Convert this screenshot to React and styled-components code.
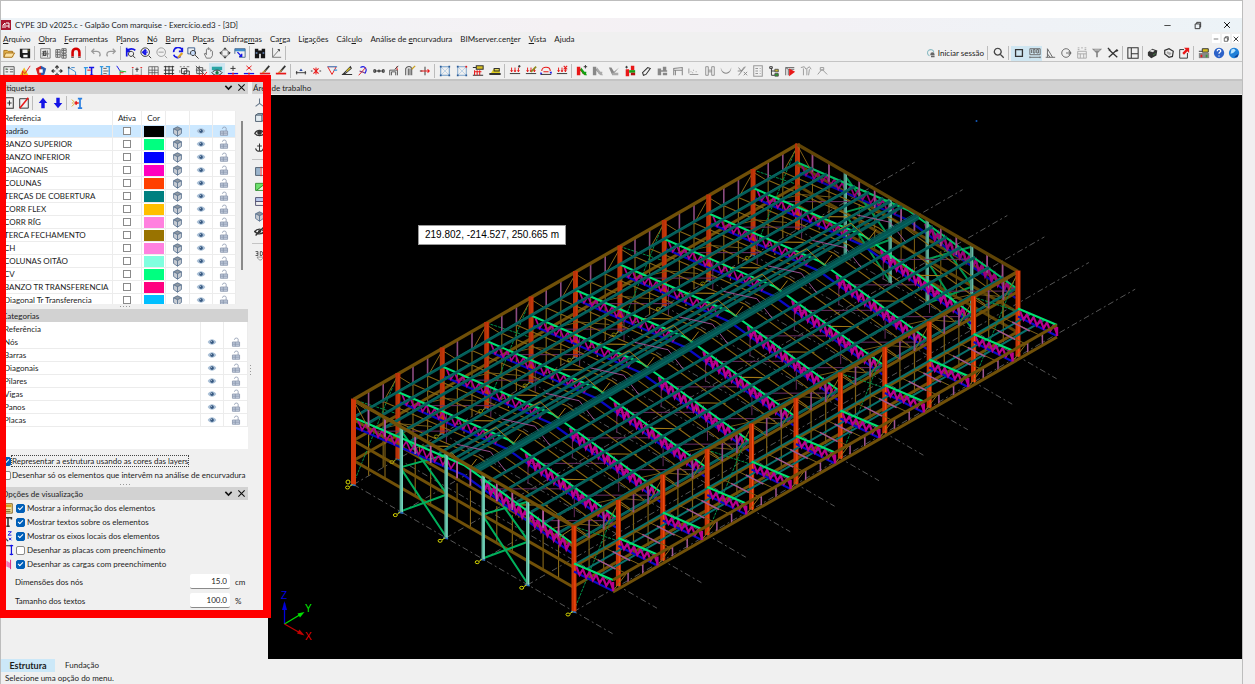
import React, { useState } from 'react'
import styled, { createGlobalStyle } from 'styled-components'

/* ---------- icons: [colour, path, 'f' when filled, stroke width] ---------- */
const K = '#333'
const G = '#9a9a9a'
const B = '#1414e6'
const R = '#e81818'

const lens = (c) => [[c, 'M5.5 1.5a4 4 0 1 0 .1 0M8.5 8.5l4 4', '', 1.5]]
const loads = [[R, 'M3 3v5M2 6l1 2 1-2M7 3v5M6 6l1 2 1-2M11 3v5M10 6l1 2 1-2'], [K, 'M1 10h12']]
const bars = (a, b) => [[a, 'M1 2h4v10h-4zM1 2h2l9 9h-3z', 'f'], [b, 'M6 3l7 9h-3L5 6zM7 8h5v2H7z', 'f']]
const cube = [['#c7ccd3', 'M7 1l5 2.5v6L7 13 2 9.500v-6z', 'f'], ['#8d96a0', 'M7 1l5 2.500L7 6 2 3.500z', 'f'], ['#4f6a8a', 'M7 1l5 2.500v6L7 13 2 9.500v-6zM2 3.500L7 6l5-2.500M7 6v7', '', 1]]

const ICONS = {
  folder: [['#e5b44c', 'M1 4h4l1 1h6v7H1z', 'f'], ['#fbe0a0', 'M3 7h11l-3 5H1z', 'f'], ['#a9741d', 'M1 12V4h4l1 1h5v2M3 7h10.500l-3 5H1z']],
  save: [['#1c1c1c', 'M1 2h12v11H3l-2-2z', 'f'], ['#f4f4f4', 'M4 3h6v4H4zM5 9h5v3H5z', 'f'], ['#8c8c2c', 'M11 3h1v2h-1z', 'f']],
  sheet: [['#777', 'M2 2h11v11H2zM4 5l4 5M8 4l-4 7M10 4v8M3 8h9'], [K, 'M5 5h3v5H5z']],
  hatch: [['#666', 'M1 3h5v9H1zM8 2h5v5H8zM8 8h5v5H8zM1 6h5M1 9h5M8 4h5M8 10h5M3 3v9M10 2v11']],
  magnet: [['#d40000', 'M3 12V6a4 4 0 0 1 8 0v6', '', 3], ['#fff', 'M1.500 11h3v2h-3zM9.500 11h3v2h-3z', 'f'], [K, 'M1.500 12h3M9.500 12h3']],
  undo: [[G, 'M5 2L2 5l3 3M2 5h6c3 0 5 3 3 6', '', 1.5]],
  redo: [[G, 'M9 2l3 3-3 3M12 5H6C3 5 1 8 3 11', '', 1.5]],
  zoomPrev: [[B, 'M2 11V6c0-4 7-5 10-2M2 1v4h4', '', 2], [K, 'M7 5a3 3 0 1 0 .1 0M9 10l3 3']],
  zoomAll: [[K, 'M6 1a5 5 0 1 0 .1 0M10 10l3 3'], [B, 'M6 3v6M3 6h6M4.500 4.500L6 3l1.500 1.500M4.500 7.500L6 9l1.500-1.500M4.500 4.500L3 6l1.500 1.500', '', 1.5]],
  zoomDis: [[G, 'M6 1a5 5 0 1 0 .1 0M10 10l3 3M3 6h6']],
  redraw: [[B, 'M12 5A5 5 0 0 0 2 6M2 9a5 5 0 0 0 8 2M12 1v4H8', '', 2], ['#dca32c', 'M6 12l5-6 2 2-5 5z', 'f']],
  zoomWin: [['#3c5c8c', 'M1 1h8v7H1z'], ['#c8dcf8', 'M6 4a3 3 0 1 0 .1 0', 'f'], [K, 'M7 4a3 3 0 1 0 .1 0M9.500 9.500l4 4']],
  hand: [['#777', 'M4 13L1.500 8l1-1L4 9V3l1-1 1 1V1h1v2l1-1 1 1v2l1-1 1 1v5l-2 3z']],
  orbit: [[K, 'M7 1v3M7 10v3M1 7h3M10 7h3M5 3l2-2 2 2M5 11l2 2 2-2M3 5L1 7l2 2M11 5l2 2-2 2'], ['#777', 'M7 3a4 4 0 1 0 .1 0']],
  fitWin: [['#3f8fd0', 'M1 2h12v3H1z', 'f'], ['#4c6c90', 'M1 2h12v10H6M1 2v6'], [B, 'M4 6l5 5M9 8v3H6', '', 1.5]],
  binoc: [['#161616', 'M1 2h4v2h4V2h4v11H8V8H6v5H1z', 'f'], ['#6d8fc4', 'M2 6h2v2H2zM10 6h2v2h-2z', 'f']],
  angle: [['#777', 'M3 1v11h10M3 12L11 3'], [K, 'M9 3h2v2']],
  search: lens('#444'),
  square: [[K, 'M3 3h8v8H3z', '', 1.5]],
  ruler: [['#666', 'M1 2h12v7H1zM3 3v4M5 3v4h2V3zM9 3v4h2V3zM1 12h12M1 11v2M13 11v2']],
  tri: [['#666', 'M2 12h11M4 12V2l6 10M4 8l3 4']],
  dial: [['#666', 'M7 2a5 5 0 1 0 .1 0M7 7h6M10 5l3 2-3 2']],
  panels: [['#aaa', 'M2 5h10v8H2zM2 1h2M6 1h2M10 1h2M2 3h2M10 3h2M2 8h10M5 8v5M9 8v5']],
  funnel: [['#888', 'M1 2h12L8 7v5H6V7z', 'f'], ['#ddd', 'M4 3h6v1H4z', 'f']],
  tools: [[K, 'M2 3l10 9M12 3L2 12M1 1l3 3M10 5l3-1', '', 1.5]],
  layout: [[K, 'M1 1h12v12H1zM5 1v12M5 8h8', '', 1.2]],
  printer: [[K, 'M1 6l5-4 6 2-1 6-6 3-4-3z', 'f'], ['#ddd', 'M5 3l4 1-2 2-4-1z', 'f'], ['#4a9a4a', 'M7 9l3-2v1L7 10z', 'f']],
  printer2: [[K, 'M2 4l5-2 5 3-1 6-4 1-5-4z', '', 1.4], ['#aaa', 'M5 5l5 2-2 3-4-3z', 'f']],
  export: [[K, 'M7 3H2v10h9V7'], [R, 'M7 1h6v6l-2-2-4 4-2-2 4-4z', 'f']],
  site: [['#888', 'M1 7h12v6H1z', 'f'], ['#d8c020', 'M5 2h7v4H5z', 'f'], [K, 'M5 2h7v4H5zM1 5h4'], [R, 'M3 9h2v3H3z', 'f'], ['#3a9a3a', 'M9 9h2v3H9z', 'f']],
  help: [['#2c62c8', 'M7 1a6 6 0 1 0 .1 0', 'f'], ['#fff', 'M5 5c0-3 4-3 4 0 0 1-2 1-2 3M7 10v1', '', 1.5]],
  globe: [['#1f7fd8', 'M7 1a6 6 0 1 0 .1 0', 'f'], ['#b8e4ff', 'M4 3l3-1 2 2-3 3-3 1z', 'f'], ['#0c3c90', 'M7 12l5-4-1 4z', 'f']],
  user: [['#8cbcc4', 'M11 6a4.500 4.500 0 1 0-6 5', '', 1.5], ['#666', 'M6 9a3 3 0 0 1 6 0v1H6zM7 11h5v2H7z', 'f']],
  list: [['#555', 'M1 2h12v10H1zM3 5h3M3 8h3M8 5h4M8 8h4'], ['#5d8f5d', 'M3 4h2v1H3z', 'f']],
  warn: [['#f0c020', 'M6 3l5 9H1z', 'f'], [R, 'M4 12V7l3 3 6-9', '', 1]],
  shield: [['#d42020', 'M1 4l6-3v12l-4-2z', 'f'], ['#2c5cb0', 'M7 1l6 3-2 7-4 2z', 'f'], ['#fff', 'M5 5h4v4H5z', 'f']],
  move: [[K, 'M7 1v4M7 9v4M1 7h4M9 7h4M5 3l2-2 2 2M5 11l2 2 2-2M3 5L1 7l2 2M11 5l2 2-2 2', '', 1.3]],
  rotate: [['#3f86c8', 'M2 3v9h10M2 3l8 5v4M5 3h4'], [K, 'M1 2h2v2H1z', 'f']],
  beamRed: [[B, 'M7 3h6M10 3v9M8 12h4', '', 1.8], ['#3498e0', 'M1 3h5M3 3v9', '', 1.5], [R, 'M5 6h4', '', 1.2]],
  beamBlue: [['#3498e0', 'M1 2h4M1 12h4M3 2v10M8 2h5M8 12h5M12 2v10', '', 1.5], [K, 'M5 4h4M5 7h6M5 10h4', '', .8]],
  axes: [['#22b022', 'M6 7l7 1M6 7v5'], [B, 'M2 1l4 6'], [R, 'M6 9h4']],
  dims: [['#888', 'M2 4v8h10V4'], [R, 'M1 3h2M11 3h2'], [K, 'M7 3v5M5 5h4M5 12h4']],
  grid: [['#555', 'M2 2h11v11H2zM2 6h11M2 9h11M6 2v11M9 2v11', '', .9]],
  gridThick: [[K, 'M1 2h12M1 6h12M1 10h12M3 1v12M7 1v12M11 1v12', '', 1.1]],
  group: [[K, 'M3 4h6v6H3zM6 7h6v5H6z'], ['#777', 'M1 2h2M5 2h2M9 2h3M1 6v3']],
  groupRed: [['#555', 'M2 3h7v7H2zM5 1v12M1 6h12M1 1l11 11'], [R, 'M8 10l2 3 4-5']],
  eyeGrid: [['#2aa5a5', 'M1 2h12v4H1z', 'f'], [K, 'M1 9c3-4 9-4 12 0-3 4-9 4-12 0z'], ['#1d7a45', 'M7 7a2 2 0 1 0 .1 0', 'f']],
  nodeAdd: [[K, 'M7 1v6M4 4h6'], [B, 'M1 10h12', '', 1.5], [R, 'M6 9h2v2H6z', 'f']],
  nodeDel: [[R, 'M4 1l6 5M10 1L4 6'], [B, 'M1 10h12', '', 1.5], [R, 'M6 9h2v2H6z', 'f']],
  pencilRed: [[K, 'M12 1L6 8', '', 2], ['#d8a040', 'M9 5l-4 5-2 1 1-3z', 'f'], [R, 'M1 10h12', '', 2]],
  barNode: [[K, 'M1 9h12M2 7v4M12 7v4'], ['#2c4ca8', 'M5 7l2-3 2 3z', 'f']],
  barDel: [[R, 'M4 4l6 6M10 4l-6 6M7 3v8', '', 1.2], [K, 'M1 7h2M11 7h2']],
  hinge: [[R, 'M2 2l5 9 5-9z'], ['#3498e0', 'M2 2h11M9 6h4', '', 1.3]],
  pencil: [[K, 'M1 11h12M3 10l8-8 1 2-7 6z', '', 1.2], ['#d8c020', 'M6 7l4-4 1 1-4 4z', 'f']],
  release: [[B, 'M4 3c5-3 9 2 5 7', '', 1.3], [R, 'M2 12l8-9'], ['#7c2c7c', 'M3 7l6 2', '', 1.3]],
  span: [[K, 'M1 7h12M1 5.500h2v3H1zM11 5.500h2v3h-2zM6 6h2v2H6z']],
  frame: [['#555', 'M2 12V6h9v6M4 12V8h5v4'], [R, 'M10 2l1 4'], [K, 'M8 5l4-4']],
  arch: [['#555', 'M2 12V4c2-3 6-3 7 0v8M5 12V4M7 12V4', '', 1.2], ['#caa020', 'M9 5l4-4', '', 1.5]],
  split: [[K, 'M7 2v10M1 7h3'], [R, 'M2 7h10M10 5l2 2-2 2', '', 1.2]],
  panel: [['#6f9cc8', 'M2 2h10v10H2z', '', 1.2], ['#9dc0e0', 'M2 2l10 10M12 2L2 12', '', .7], ['#2c5c98', 'M1 1h2v2H1zM11 1h2v2h-2zM1 11h2v2H1zM11 11h2v2h-2z', 'f']],
  panelRed: [['#6f9cc8', 'M2 2h10v10H2z', '', 1], ['#9dc0e0', 'M2 2l10 10M12 2L2 12', '', .7], ['#2c5c98', 'M1 1h2v2H1zM1 11h2v2H1zM11 11h2v2h-2z', 'f'], [R, 'M11 1h2v2h-2z', 'f']],
  loadCase: [['#d8c020', 'M5 1h8v4H5z', 'f'], [K, 'M5 1h8v4H5zM1 3h4M1 12h12', '', 1.2], [R, 'M3 6v6M6 6v6M9 6v6M3 8h8', '', 1.2]],
  truck: [['#e0d020', 'M5 5h7l1 5H2z', 'f'], [K, 'M6 4h6v3H6zM1 10h12v1H1z', '', 1.2]],
  loadAdd: [...loads, [K, 'M12 0v3M10.500 1.500h3']],
  loadEdit: [...loads, ['#8c8c20', 'M7 8l6-6', '', 2]],
  loadMove: [[R, 'M2 7c0-6 10-6 10 0M4 8h6', '', 1.2], [B, 'M1 8l2 3H0zM11 8h3l-1 3z', 'f'], [K, 'M1 11h12']],
  loadDel: [...loads, [R, 'M9 1l4 4M13 1L9 5', '', 1.3]],
  rg: [...bars(R, '#11a011'), [K, 'M9 2h4M11 0v4']],
  gy: bars('#888', '#aaa'),
  gy2: [['#888', 'M1 3l4 9 8-9-6 5-3-5z', 'f'], ['#aaa', 'M5 9h7v3H5z', 'f']],
  rg2: [[R, 'M2 5h4v8H2zM8 1h4v5H8z', 'f'], ['#11a011', 'M6 6h7v3H6z', 'f'], ['#b01010', 'M8 9h5v3H8z', 'f'], [K, 'M3 1v3M1.500 2.500h3']],
  brush: [[K, 'M4 12L3 9l6-6 3 1-5 7z', '', 1.2]],
  gySteel: [['#888', 'M2 4h4v8H2zM8 2h4v4H8zM6 6h7v2H6zM8 9h5v3H8z', 'f']],
  portal: [['#888', 'M2 12V4l10-1v9M2 6h10M4 12V6', '', 1.2]],
  dots: [['#999', 'M2 11h10M3 8h1M6 6h1M9 8h1M5 9h1M1 4v6', '', 1.2]],
  hbeam: [['#888', 'M2 2h3v10H2zM9 2h3v10H9zM5 6h4M5 8h4', '', 1]],
  curve: [['#888', 'M1 3c1 8 11 8 12 0v2c-2 7-10 7-12 0z', 'f']],
  slash: [['#888', 'M3 3l3 4 4-5M3 12L11 2M6 7H2M9 8l4 4M13 8l-4 4']],
  report: [['#999', 'M2 1h10v12H2zM4 4h3M4 7h3M4 10h3M9 4h1M9 7h1M9 10h1', '', 1.2]],
  tree: [[K, 'M2 2h3v2H2zM4 4v8h4M4 7h4'], ['#c8b820', 'M8 5h4v3H8z', 'f'], ['#26a026', 'M8 10h4v3H8z', 'f'], ['#555', 'M8 5h4v3H8zM8 10h4v3H8z']],
  play: [['#666', 'M2 12V3h10M5 12V5h7M2 3l3 2'], [R, 'M6 4l7 4-7 5z', 'f']],
  poly: [['#999', 'M1 3l4-1 2 3 4-3 2 3M4 4v8M8 5v7M11 5l-1 7']],
  node: [['#999', 'M2 11l5-6 6 6M5 3h4v3H5z']],
  newDoc: [[K, 'M3 1h9v12H3zM5 7h5M7.500 4v6', '', 1.2]],
  noDoc: [[K, 'M2 2h10v11H2z'], [R, 'M12 1L2 13', '', 1.8]],
  up: [[B, 'M7 1l5 6H9v6H5V7H2z', 'f']],
  down: [[B, 'M7 13l5-6H9V1H5v6H2z', 'f']],
  assign: [['#2a7fe0', 'M8 2h5M8 13h5M10.500 2v11', '', 2], [R, 'M4 7h5M6 5v4', '', 2], ['#d8b020', 'M1 3l3 3M1 11l3-3M1 7h2']],
  axis3: [['#678', 'M7 2v6M7 8l-5 4M7 8l5 4', '', 1.3]],
  cube,
  box: [['#a9c0cf', 'M2 4l3-2h8v8l-3 2H2z', 'f'], ['#e4edf2', 'M2 4h8v8H2z', 'f'], ['#456', 'M2 4h8v8H2zM2 4l3-2h8v8l-3 2M10 4l3-2']],
  eye: [['#a9bfd6', 'M1 7c3-5 9-5 12 0-3 5-9 5-12 0z', 'f'], ['#35577f', 'M7 4.500a2.500 2.500 0 1 0 .1 0', 'f'], ['#fff', 'M6 6h1v1H6z', 'f']],
  eyeBlack: [[K, 'M1 8c3-5 9-5 12 0-3 4-9 4-12 0z', '', 1.5], [K, 'M7 4a3 3 0 1 0 .1 0', 'f']],
  eyeOff: [[K, 'M1 7c3-4 9-4 12 0-3 4-9 4-12 0zM2 12L12 2', '', 1.8], [K, 'M7 5a2 2 0 1 0 .1 0', 'f']],
  anchor: [[K, 'M7 2v10M4 5h6M2 8c1 5 9 5 10 0', '', 1.3]],
  lock: [['#c3cddd', 'M2 7h10v6H2z', 'f'], ['#8794ab', 'M2 7h10v6H2zM5 4V3c0-2 5-2 5 0v4M2 10h10M6 7v6']],
  section: [['#9bb4cc', 'M2 2h6v10H2z', 'f'], ['#456', 'M2 2h10v10H2z'], [R, 'M9 1v12']],
  green: [['#6ee06e', 'M2 3h11v9H2z', 'f'], ['#e8f8e8', 'M4 12l9-7v7z', 'f'], ['#2c8a2c', 'M2 3h11v9H2zM3 12l9-7']],
  plan: [['#b8c8ec', 'M2 2h11v5H2z', 'f'], ['#446', 'M2 2h11v10H2zM2 7h11']],
  info: [['#f4e8a8', 'M2 2h10v11H2z', 'f'], ['#806020', 'M2 2h10v11H2zM4 9h6M4 11h6'], ['#d8a020', 'M3 3h8v3H3z', 'f']],
  textT: [[K, 'M3 4V2h8v2M7 2v10M5 12h4', '', 1.8]],
  local: [[K, 'M2 2v7l5 4M5 10l2 3'], [B, 'M7 2h4L7 6h4M8 9l3 3M11 9l-3 3']],
  plates: [[K, 'M2 2v10M2 2h9', '', 1.3], [B, 'M11 1v12M9 12h4M9 2h4', '', 1.4]],
  loadFill: [['#f07ab8', 'M5 3l5 3v6l-5-2z', 'f'], ['#d82080', 'M4 1v12M10 2v11']],
  view3d: [['#444', 'M2 2h3v5H2M3 4.500h2M8 2v5M8 2h2l1 2v1l-1 2H8'], ['#888', 'M4 9c2 5 6 5 8 0M4 9h8']],
  chevron: [['#111', 'M3 5l4 4 4-4', '', 2]],
  close: [['#111', 'M3 3l8 8M11 3l-8 8', '', 1.4]],
  min: [[K, 'M3 7h8']],
  restore: [[K, 'M4 5h6v6H4zM6 5V3h5v6h-1', '', 1.2]],
}

const IconSvg = styled.svg`
  display: block;
  flex: none;
  width: ${(p) => p.$size}px;
  height: ${(p) => p.$size}px;
`

const Icon = ({ name, size = 12 }) => (
  <IconSvg $size={size} viewBox="0 0 14 14" aria-hidden="true">
    {ICONS[name].map(([c, d, mode, w], i) =>
      mode === 'f' ? <path key={i} d={d} fill={c} /> : <path key={i} d={d} fill="none" stroke={c} strokeWidth={w || 1.1} />
    )}
  </IconSvg>
)

/* ---------- data ---------- */
const menus = ['_Arquivo', '_Obra', '_Ferramentas', 'P_lanos', '_Nó', '_Barra', 'Pla_cas', 'Diafrag_mas', 'Ca_rga', 'Liga_ções', 'Cálc_ulo', 'Análise de _encurvadura', 'BIMserver.cen_ter', '_Vista', 'A_juda']

const mainTools = [
  [32, ['folder', 'save']],
  [47, ['sheet', 'hatch', 'magnet']],
  [31, ['undo', 'redo']],
  [125, ['zoomPrev', 'zoomAll', 'zoomDis', 'redraw', 'zoomWin', 'hand', 'orbit', 'fitWin']],
  [32, ['binoc', 'angle']],
]
const rightTools = [
  [17, ['search']],
  [110, ['square', 'ruler', 'tri', 'dial', 'panels', 'funnel', 'tools']],
  [16, ['layout']],
  [47, ['printer', 'printer2', 'export']],
  [46, ['site', 'help', 'globe']],
]
const barTools = [
  [288, ['list', 'warn', 'shield', 'move', 'rotate', 'beamRed', 'beamBlue', 'axes', 'dims', 'grid', 'gridThick', 'group', 'groupRed', 'eyeGrid', 'nodeAdd', 'nodeDel', 'pencilRed', 'pencilRed']],
  [140, ['barNode', 'barDel', 'hinge', 'pencil', 'release', 'span', 'frame', 'arch', 'split']],
  [66, ['panel', 'panelRed', 'loadCase', 'truck']],
  [63, ['loadAdd', 'loadEdit', 'loadMove', 'loadDel']],
  [256, ['rg', 'gy', 'gy2', 'rg2', 'brush', 'gySteel', 'portal', 'dots', 'hbeam', 'curve', 'slash', 'report', 'tree', 'play', 'poly', 'node']],
]
const sideTools = [
  ['axis3', 'box', 'eyeBlack', 'anchor'],
  ['section', 'green', 'plan', 'cube', 'eyeOff'],
  ['view3d'],
]
const active = ['square', 'ruler', 'eyeGrid']

const layers = [
  ['padrão', '#000000'],
  ['BANZO SUPERIOR', '#00ff80'],
  ['BANZO INFERIOR', '#0000ff'],
  ['DIAGONAIS', '#ff00bf'],
  ['COLUNAS', '#ff4000'],
  ['TERÇAS DE COBERTURA', '#008080'],
  ['CORR FLEX', '#ffbf00'],
  ['CORR RÍG', '#ff80df'],
  ['TERCA FECHAMENTO', '#997300'],
  ['CH', '#ff80df'],
  ['COLUNAS OITÃO', '#80ffdf'],
  ['CV', '#00ff80'],
  ['BANZO TR TRANSFERENCIA', '#ff0080'],
  ['Diagonal Tr Transferencia', '#00bfff'],
]
const categories = ['Nós', 'Barras', 'Diagonais', 'Pilares', 'Vigas', 'Panos', 'Placas']
const viewOptions = [
  ['info', 'Mostrar a informação dos elementos', true],
  ['textT', 'Mostrar textos sobre os elementos', true],
  ['local', 'Mostrar os eixos locais dos elementos', true],
  ['plates', 'Desenhar as placas com preenchimento', false],
  ['loadFill', 'Desenhar as cargas com preenchimento', true],
]

/* ---------- 3D model ---------- */
// u: bay along the building (0-10), v: across the span (0-1), h: height from the parapet
const pt = (u, v, h) => `${(353.5 + 44.4 * u + 220.5 * v).toFixed(1)} ${(399.5 - 25.5 * u + 127 * v - h).toFixed(1)}`
const ln = (...pts) => 'M' + pts.map((p) => pt(...p)).join('L')
const roof = (v) => -18 + 32 * Math.min(v, 1 - v)
const range = (n, from = 0) => Array.from({ length: n }, (_, i) => i + from)
const bays = range(11)
const gables = [0.217, 0.42, 0.588, 0.79]
const studs = [0.068, 0.143, 0.28, 0.35, 0.47, 0.53, 0.65, 0.72, 0.86, 0.93]
const thirds = range(10).flatMap((u) => [u + 0.34, u + 0.67])

const zigzag = (u, v0, v1, top, depth, n) =>
  ln(...range(n + 1).map((i) => {
    const v = v0 + ((v1 - v0) * i) / n
    return [u, v, top(v) - (i % 2 ? depth : 1)]
  }))

const Ground = () => (
  <g fill="none" stroke="#6c6c6c" strokeWidth="0.8" strokeDasharray="6 3 2 3">
    <path d={bays.map((u) => ln([u, 0, -85], [u, 1.175, -85])).join('')} />
    <path d={[0, ...gables, 1].map((v) => ln([0, v, -85], [12.64, v, -85])).join('')} />
  </g>
)

const Truss = ({ u }) => (
  <g fill="none">
    <path d={ln([u, 0.01, -27], [u, 0.5, roof(0.5) - 10], [u, 0.99, -28])} stroke="#0808c4" strokeWidth="2.2" />
    <path d={zigzag(u, 0.02, 0.46, roof, 9, 24)} stroke="#b0008a" strokeWidth="1.7" />
    <path d={zigzag(u, 0.58, 0.98, roof, 10, 28)} stroke="#b8008e" strokeWidth="2.5" />
    <path d={ln([u, 0, -18], [u, 0.5, roof(0.5)], [u, 1, -18])} stroke="#00e074" strokeWidth="2" />
  </g>
)

const Gable = ({ u, back }) => (
  <g fill="none" opacity={back ? 0.85 : 1}>
    <path d={studs.map((v) => ln([u, v, -24], [u, v, -61])).join('')} stroke="#96721a" strokeWidth="1" />
    <path d={[-20, -41, -61].map((h) => ln([u, 0, h], [u, 1, h])).join('')} stroke="#705008" strokeWidth="3" />
    <path
      d={[[0, 1], [2, 3]].map(([a, b]) => {
        const [p, q] = [gables[a], gables[b]]
        return ln([u, p, -40], [u, q, -2]) + ln([u, p, -84], [u, q, -42]) + ln([u, p, -4], [u, q, -40]) + ln([u, p, -42], [u, q, -84])
      }).join('')}
      stroke="#00b05c"
      strokeWidth="2"
    />
    <Truss u={u} />
    <path d={gables.map((v) => ln([u, v, 0], [u, v, -85])).join('')} stroke="#5cb09a" strokeWidth="3.4" />
    <path d={gables.map((v) => ln([u, v + 0.004, 0], [u, v + 0.004, -85])).join('')} stroke="#7ee6cc" strokeWidth="1" />
    <path d={studs.map((v) => ln([u, v, -1], [u, v, -19])).join('')} stroke="#b45a9e" strokeWidth="1.8" />
    <path d={ln([u, 0, -1], [u, 0.068, -20]) + ln([u, 1, -1], [u, 0.93, -20])} stroke="#96721a" />
    <path d={ln([u, 0, 0], [u, 1, 0])} stroke="#705008" strokeWidth="3.4" />
  </g>
)

const SideWall = ({ v, near }) => (
  <g fill="none">
    <path d={thirds.map((u) => ln([u, v, -20], [u, v, near ? -62 : -85])).join('')} stroke="#7c6018" strokeWidth="1.2" />
    <path d={(near ? [-20, -40, -60] : [-41, -61]).map((h) => ln([0, v, h], [10, v, h])).join('')} stroke="#705008" strokeWidth="3" />
    <path
      d={[0, 3, 6, 9].map((u) => ln([u, v, -84], [u + 1, v, 0]) + ln([u, v, 0], [u + 1, v, -40])).join('')}
      stroke="#009048"
      strokeWidth="1"
      strokeDasharray="3 1"
    />
    <path d={bays.map((u) => (u < 10 ? ln([u, v, -2], [u + 0.34, v, -20]) : '') + (u ? ln([u, v, -2], [u - 0.34, v, -20]) : '')).join('')} stroke="#8c6a18" />
    <path d={thirds.map((u) => ln([u, v, -1], [u, v, -20])).join('')} stroke="#8c4c80" strokeWidth="1.6" />
    <path d={ln([0, v, 0], [10, v, 0])} stroke="#705008" strokeWidth="3.4" />
    <path d={bays.map((u) => ln([u, v, 1], [u, v, -85])).join('')} stroke={near ? '#c83404' : '#b83208'} strokeWidth="5" />
    <path d={bays.map((u) => ln([u, v + 0.004, 1], [u, v + 0.004, -85])).join('')} stroke={near ? '#f85014' : '#cc3c0c'} strokeWidth="1" />
  </g>
)

const purlins = range(8).flatMap((i) => [0.004 + i * 0.064, 0.996 - i * 0.064])

// thin bracing that hangs below the purlins
const Bracing = () => (
  <g fill="none">
    <path
      d={range(10).flatMap((u) => [0.06, 0.6, 0.8].map((v) => ln([u, v, roof(v) - 8], [u + 0.95, v + 0.19, roof(v) - 8]))).join('')}
      stroke="#6c3064"
      strokeWidth="1"
    />
    <path d={range(9, 1).flatMap((u) => [0.22, 0.59, 0.8].map((v) => ln([u, v, roof(v)], [u, v, roof(v) - 30]))).join('')} stroke="#642c5e" />
    <path d={thirds.map((u) => ln([u, 0, -19], [u, 0.5, roof(0.5) - 1], [u, 1, -19])).join('')} stroke="#8a6814" strokeWidth="1.1" />
    <path
      d={range(10).flatMap((u) => [0.3, 0.75].map((v) => ln([u, v, roof(v) - 13], [u, v, roof(v)], [u + 0.36, v + 0.06, roof(v) - 2]))).join('')}
      stroke="#a07816"
      strokeWidth="1.1"
    />
    <path d={range(10).flatMap((u) => [0.12, 0.9].map((v) => ln([u, v, roof(v)], [u + 0.34, v + 0.03, roof(v)], [u + 0.67, v + 0.1, roof(v) - 2]))).join('')} stroke="#745a16" />
  </g>
)

const Purlins = () => (
  <g fill="none">
    <path d={purlins.map((v) => ln([0, v, roof(v) + 1], [10, v, roof(v) + 1])).join('')} stroke="#045c58" strokeWidth="2.8" />
    <path d={purlins.map((v) => ln([0, v, roof(v) + 2], [10, v, roof(v) + 2])).join('')} stroke="#08726c" strokeWidth="0.7" />
    <path d={[0.42, 0.475].map((v) => ln([0, v, roof(v) + 1], [10, v, roof(v) + 1])).join('')} stroke="#045c58" strokeWidth="3.4" />
    <path d={range(10).map((u) => ln([u, 0.39, -10], [u + 0.12, 0.42, -3], [u + 0.12, 0.5, -9], [u + 0.24, 0.51, -1])).join('')} stroke="#a87e1a" />
    <path d={range(10).map((u) => ln([u + 0.35, 0.4, -3], [u + 0.6, 0.5, -4], [u + 0.45, 0.6, -7])).join('')} stroke="#9a5090" />
    <path d={ln([0, 0.544, -3], [10, 0.544, -3])} stroke="#045854" strokeWidth="6.5" />
    <path d={ln([0, 0.55, -2], [10, 0.55, -2]) + ln([0, 0.53, -2], [10, 0.53, -2])} stroke="#0a726c" strokeWidth="0.8" />
  </g>
)

const E = 1.177
const Canopy = () => (
  <g fill="none">
    <path d={[1.01, 1.06, 1.12].map((v) => ln([0, v, -36 + (v - 1) * 24], [10, v, -36 + (v - 1) * 24])).join('')} stroke="#08706c" strokeWidth="2" />
    <path d={thirds.map((u) => ln([u, 1, -38], [u, E, -34])).join('')} stroke="#7c6018" />
    <path d={thirds.map((u) => ln([u, 1.04, -37], [u, 1.12, -36])).join('')} stroke="#a05694" strokeWidth="1.5" />
    {bays.map((u) => (
      <g key={u}>
        <path d={ln([u, 1, -45], [u, E, -42])} stroke="#0a0ac8" strokeWidth="2" />
        <path d={zigzag(u, 1.01, E, (v) => -38 + (v - 1) * 36, 8, 11)} stroke="#b8008c" strokeWidth="2.2" />
        <path d={ln([u, 1, -37], [u, E, -31])} stroke="#00e070" strokeWidth="2" />
      </g>
    ))}
    <path d={thirds.map((u) => ln([u, E, -31], [u, E, -42])).join('')} stroke="#a05694" strokeWidth="1.5" />
    <path d={range(10).map((u) => ln([u, E, -42], [u + 0.34, E, -31])).join('')} stroke="#96721a" />
    <path d={ln([0, E, -31], [10, E, -31]) + ln([0, E, -43], [10, E, -43])} stroke="#705008" strokeWidth="3" />
    <path d={bays.map((u) => ln([u, E, -33], [u, E, -42])).join('')} stroke="#b8008c" strokeWidth="2.4" />
  </g>
)

const Supports = () => {
  const bases = [[0, 0], [0, 1], ...gables.map((v) => [0, v]), ...range(9, 1).map((u) => [u, 0])]
  return (
    <g>
      {bases.map(([u, v]) => {
        const [x, y] = pt(u, v, -85).split(' ').map(Number)
        return (
          <g key={`${u}-${v}`} opacity={u ? 0.6 : 1}>
            <path d={`M${x - 3} ${y}l5 1`} stroke="#2a70c0" strokeWidth="1.6" />
            <path d={`M${x - 6} ${y + 3}m-2 0a2 1.500 0 1 0 4 0a2 1.500 0 1 0-4 0M${x - 4} ${y + 2}l3-2`} fill="none" stroke="#d8d800" strokeWidth="1" />
          </g>
        )
      })}
      <circle cx="348" cy="482" r="2" fill="none" stroke="#d8d800" />
    </g>
  )
}

const Scene = styled.svg`
  display: block;
  width: 100%;
  height: 100%;
`
const AxisName = styled.text`
  font: 10px 'Liberation Sans', Arial, sans-serif;
  fill: ${(p) => p.$color};
`

const Model = () => (
  <Scene viewBox="268 95 974 564" role="img" aria-label="3D">
    <Ground />
    <SideWall v={0} />
    <Gable u={10} back />
    <Bracing />
    {range(9, 1).reverse().map((u) => <Truss key={u} u={u} />)}
    <Purlins />
    <Gable u={0} />
    <SideWall v={1} near />
    <Canopy />
    <path d={ln([0, 0, 0], [0, 0, -85])} stroke="#d03808" strokeWidth="5" />
    <Supports />
    <circle cx="976.500" cy="121" r="1" fill="#1458b8" />
    <g fill="none" strokeWidth="1.3">
      <path d="M284.500 624V603" stroke="#0000d8" />
      <path d="M284.500 624L302 613.500" stroke="#00e000" />
      <path d="M284.500 624L302 634" stroke="#c00000" />
    </g>
    <path d="M284.500 601l2.500 9h-5z" fill="#0000d8" />
    <path d="M304.500 612l-7 1.500 2.500 4z" fill="#00e000" />
    <path d="M304.500 635.500l-5-6-2.500 4z" fill="#c00000" />
    <AxisName x="281" y="599" $color="#0000e8">Z</AxisName>
    <AxisName x="305" y="612" $color="#00f000">Y</AxisName>
    <AxisName x="305" y="640" $color="#f00000">X</AxisName>
  </Scene>
)

/* ---------- page parts ---------- */
const Tools = ({ groups, endSep }) =>
  groups.map(([w, names], i) => (
    <React.Fragment key={i}>
      {i > 0 && <Sep />}
      <Group $w={w}>
        {names.map((n, j) => (
          <ToolButton key={j} type="button" aria-label={n} $on={active.includes(n)}>
            <Icon name={n} />
          </ToolButton>
        ))}
      </Group>
      {endSep && i === groups.length - 1 && <Sep />}
    </React.Fragment>
  ))

const PanelHead = ({ title, closable }) => (
  <PanelBar>
    <PanelTitle>{title}</PanelTitle>
    {closable && (
      <>
        <PlainButton type="button" aria-label="Recolher"><Icon name="chevron" size={11} /></PlainButton>
        <PlainButton type="button" aria-label="Fechar"><Icon name="close" size={11} /></PlainButton>
      </>
    )}
  </PanelBar>
)

const LayerTable = () => (
  <Scroll>
    <Table>
      <colgroup>
        <col />
        <Col $w={29} /><Col $w={24} /><Col $w={24} /><Col $w={23} /><Col $w={23} />
      </colgroup>
      <thead>
        <tr>
          <Th>Referência</Th><Th $mid>Ativa</Th><Th $mid>Cor</Th><Th /><Th /><Th />
        </tr>
      </thead>
      <tbody>
        {layers.map(([name, color], i) => (
          <Row key={name} $selected={i === 0}>
            <Td>{name}</Td>
            <Td><Mid><Check type="checkbox" $small aria-label={name} /></Mid></Td>
            <Td><Mid><Swatch $color={color} /></Mid></Td>
            <Td><Mid><Icon name="cube" size={11} /></Mid></Td>
            <Td><Mid><Icon name="eye" size={10} /></Mid></Td>
            <Td><Mid><Icon name="lock" size={10} /></Mid></Td>
          </Row>
        ))}
      </tbody>
    </Table>
    <Track><Thumb /></Track>
  </Scroll>
)

const CategoryTable = () => (
  <CategoryBox>
    <Table>
      <colgroup><col /><Col $w={23} /><Col $w={24} /></colgroup>
      <thead>
        <tr><Th>Referência</Th><Th /><Th /></tr>
      </thead>
      <tbody>
        {categories.map((name) => (
          <Row key={name}>
            <Td>{name}</Td>
            <Td><Mid><Icon name="eye" size={10} /></Mid></Td>
            <Td><Mid><Icon name="lock" size={10} /></Mid></Td>
          </Row>
        ))}
      </tbody>
    </Table>
  </CategoryBox>
)

const MenuLabel = ({ text }) => {
  const i = text.indexOf('_')
  return <>{text.slice(0, i)}<u>{text[i + 1]}</u>{text.slice(i + 2)}</>
}

const App = () => {
  const [tab, setTab] = useState('Estrutura')
  return (
    <Page>
      <GlobalStyle />
      <Window>
        <TopBand />
        <TitleBar>
          <AppMark viewBox="0 0 10 10" aria-hidden="true">
            <path d="M0 0h10v10H0z" fill="#a81830" />
            <path d="M2 8V5l2-2v5M5 3h3v5M5 6h3" fill="none" stroke="#fff" strokeWidth="1" />
          </AppMark>
          <Title>CYPE 3D v2025.c - Galpão Com marquise - Exercício.ed3 - [3D]</Title>
          <WinButton type="button" aria-label="Minimizar"><Icon name="min" size={11} /></WinButton>
          <WinButton type="button" aria-label="Restaurar"><Icon name="restore" size={11} /></WinButton>
          <WinButton type="button" aria-label="Fechar"><Icon name="close" size={10} /></WinButton>
        </TitleBar>
        <MenuBar>
          {menus.map((m) => <MenuItem key={m} href="#"><MenuLabel text={m} /></MenuItem>)}
          <Spacer />
          <ChildButton type="button" aria-label="Minimizar janela"><Icon name="min" size={8} /></ChildButton>
          <ChildButton type="button" aria-label="Restaurar janela"><Icon name="restore" size={8} /></ChildButton>
          <ChildButton type="button" aria-label="Fechar janela"><Icon name="close" size={8} /></ChildButton>
        </MenuBar>
        <Toolbar>
          <Tools groups={mainTools} endSep />
          <Spacer />
          <Login type="button"><Icon name="user" size={10} />Iniciar sessão</Login>
          <Sep />
          <Tools groups={rightTools} />
        </Toolbar>
        <Toolbar $second>
          <Tools groups={barTools} />
        </Toolbar>

        <Body>
          <Dock>
            <PanelHead title="Etiquetas" closable />
            <PanelTools>
              <Group $w={30}>
                <ToolButton type="button" aria-label="Nova"><Icon name="newDoc" /></ToolButton>
                <ToolButton type="button" aria-label="Apagar"><Icon name="noDoc" /></ToolButton>
              </Group>
              <Sep />
              <Group $w={30}>
                <ToolButton type="button" aria-label="Subir"><Icon name="up" /></ToolButton>
                <ToolButton type="button" aria-label="Descer"><Icon name="down" /></ToolButton>
              </Group>
              <Sep />
              <Group $w={16}>
                <ToolButton type="button" aria-label="Atribuir"><Icon name="assign" /></ToolButton>
              </Group>
            </PanelTools>
            <LayerTable />
            <Grip />
            <PanelHead title="Categorias" />
            <CategoryTable />
            <CheckRow>
              <Check type="checkbox" id="layers" defaultChecked />
              <CheckLabel htmlFor="layers" $focus>Representar a estrutura usando as cores das layers</CheckLabel>
            </CheckRow>
            <CheckRow>
              <Check type="checkbox" id="buckling" />
              <CheckLabel htmlFor="buckling">Desenhar só os elementos que intervêm na análise de encurvadura</CheckLabel>
            </CheckRow>
            <Grip />
            <PanelHead title="Opções de visualização" closable />
            <Options>
              {viewOptions.map(([icon, text, on]) => (
                <CheckRow key={icon} $option>
                  <Icon name={icon} />
                  <Check type="checkbox" id={icon} defaultChecked={on} />
                  <CheckLabel htmlFor={icon}>{text}</CheckLabel>
                </CheckRow>
              ))}
            </Options>
            <Field>
              <FieldLabel htmlFor="nodes">Dimensões dos nós</FieldLabel>
              <FieldInput id="nodes" defaultValue="15.0" />
              <Unit>cm</Unit>
            </Field>
            <Field>
              <FieldLabel htmlFor="texts">Tamanho dos textos</FieldLabel>
              <FieldInput id="texts" defaultValue="100.0" />
              <Unit>%</Unit>
            </Field>
          </Dock>
          <Divider><DividerDots /></Divider>
          <Work>
            <PanelHead title="Área de trabalho" />
            <WorkBody>
              <SideBar>
                {sideTools.map((g, i) => (
                  <SideGroup key={i}>
                    {g.map((n) => (
                      <ToolButton key={n} type="button" aria-label={n} $on={false}><Icon name={n} size={11} /></ToolButton>
                    ))}
                  </SideGroup>
                ))}
              </SideBar>
              <Viewport>
                <Model />
                <Coords>219.802, -214.527, 250.665 m</Coords>
              </Viewport>
            </WorkBody>
          </Work>
          <Highlight />
        </Body>

        <Tabs>
          {['Estrutura', 'Fundação'].map((t) => (
            <Tab key={t} type="button" $active={tab === t} onClick={() => setTab(t)}>{t}</Tab>
          ))}
        </Tabs>
        <Status>Selecione uma opção do menu.</Status>
      </Window>
    </Page>
  )
}

export default App

const GlobalStyle = createGlobalStyle`
  * {
    box-sizing: border-box;
  }
  body {
    margin: 0;
    background: #f1eff0;
    overflow: hidden;
  }
  button, input {
    font: inherit;
    color: inherit;
  }
`

const Page = styled.div`
  min-height: 100vh;
  display: flex;
  padding-right: 12px;
  font: 8px/12px Lato, 'Noto Sans', sans-serif;
  color: #1c1c1c;
`

const Window = styled.div`
  flex: 1;
  min-width: 0;
  display: flex;
  flex-direction: column;
  background: #f0f0f0;
  border: 1px solid #bdbdbd;
  border-bottom: 0;
`

const TopBand = styled.div`
  height: 17px;
  background: #fff;
`

const TitleBar = styled.header`
  height: 14px;
  display: flex;
  align-items: center;
  background: linear-gradient(90deg, #eef4f8, #f5f1f4 45%, #f3f1f5 65%, #ecf3f7);
`

const AppMark = styled.svg`
  width: 10px;
  height: 10px;
  margin-right: 4px;
`

const Title = styled.span`
  flex: 1;
`

const PlainButton = styled.button`
  display: flex;
  align-items: center;
  justify-content: center;
  padding: 0;
  border: 0;
  width: 13px;
  background: transparent;
`

const WinButton = styled(PlainButton)`
  width: 30px;
  height: 14px;
`

const MenuBar = styled.nav`
  height: 13px;
  display: flex;
  align-items: center;
  padding-left: 2px;
`

const MenuItem = styled.a`
  color: inherit;
  text-decoration: none;
  margin-right: 8px;
  white-space: nowrap;
`

const ChildButton = styled(PlainButton)`
  width: 8px;
  height: 9px;
  margin-right: 2px;
  background: #fff;
`

const Spacer = styled.div`
  flex: 1;
`

const Toolbar = styled.div`
  height: ${(p) => (p.$second ? 19 : 17)}px;
  display: flex;
  align-items: center;
  border-bottom: ${(p) => (p.$second ? '2px' : '1px')} solid #c4c4c4;
`

const Sep = styled.span`
  width: 1px;
  height: 14px;
  margin: 0 2px 0 1px;
  background: #bcbcbc;
`

const Group = styled.div`
  width: ${(p) => p.$w}px;
  display: flex;
`

const ToolButton = styled.button`
  flex: 1;
  min-width: 0;
  height: 15px;
  display: flex;
  align-items: center;
  justify-content: center;
  padding: 0;
  border: 0;
  background: ${(p) => (p.$on ? '#cfe6f1' : 'transparent')};
`

const Login = styled.button`
  display: flex;
  align-items: center;
  gap: 2px;
  border: 0;
  padding: 0 2px;
  background: transparent;
`

const Body = styled.main`
  position: relative;
  flex: 1;
  display: flex;
`

const Dock = styled.aside`
  width: 247px;
  flex: none;
`

const PanelBar = styled.div`
  height: 13px;
  display: flex;
  align-items: center;
  padding: 0 0 0 1px;
  background: #d2d2d2;
`

const PanelTitle = styled.span`
  flex: 1;
`

const PanelTools = styled.div`
  height: 17px;
  display: flex;
  align-items: center;
`

const Scroll = styled.div`
  display: flex;
  height: 193px;
  overflow: hidden;
  background: #f0f0f0;
`

const Table = styled.table`
  flex: 1;
  width: 100%;
  min-width: 0;
  table-layout: fixed;
  border-collapse: separate;
  border-spacing: 0;
  background: #fff;
`

const Col = styled.col`
  width: ${(p) => p.$w}px;
`

const Th = styled.th`
  height: 14px;
  padding: 0 0 0 ${(p) => (p.$mid ? 0 : 3)}px;
  font-weight: 400;
  text-align: ${(p) => (p.$mid ? 'center' : 'left')};
  border-right: 1px solid #ececec;
`

const Row = styled.tr`
  height: 13px;
  background: ${(p) => (p.$selected ? '#cce8ff' : '#fff')};
`

const Td = styled.td`
  height: 13px;
  padding: 0;
  line-height: 12px;
  border-right: 1px solid #ececec;
  border-bottom: 1px solid #ececec;
  white-space: nowrap;

  &:first-child {
    padding-left: 3px;
  }
`

const Mid = styled.div`
  height: 12px;
  display: flex;
  align-items: center;
  justify-content: center;
`

const Swatch = styled.span`
  width: 20px;
  height: 11px;
  background: ${(p) => p.$color};
`

const Track = styled.div`
  width: 12px;
  padding: 10px 5px 34px;
`

const Thumb = styled.div`
  width: 2px;
  height: 149px;
  background: #8a8a8a;
`

const Grip = styled.div`
  width: 10px;
  height: 1px;
  margin: 2px auto;
  background: repeating-linear-gradient(90deg, #999 0 1px, transparent 1px 3px);
`

const CategoryBox = styled.div`
  height: 127px;
  margin-bottom: 5px;
  background: #fff;
`

const CheckRow = styled.div`
  height: 14px;
  display: flex;
  align-items: center;
  gap: ${(p) => (p.$option ? 2 : 1)}px;
  padding-left: 1px;
`

const Check = styled.input`
  appearance: none;
  flex: none;
  width: ${(p) => (p.$small ? 8 : 9)}px;
  height: ${(p) => (p.$small ? 8 : 9)}px;
  margin: 0;
  border: 1px solid #8a8a8a;
  border-radius: ${(p) => (p.$small ? 0 : 2)}px;
  background: #fff;

  &:checked {
    border-color: #005fb8;
    background: #005fb8;
  }

  &:checked::after {
    content: '';
    display: block;
    width: 4px;
    height: 2px;
    margin: 1px auto 0;
    border: solid #fff;
    border-width: 0 0 1px 1px;
    transform: rotate(-45deg);
  }
`

const CheckLabel = styled.label`
  white-space: nowrap;
  line-height: 10px;
  outline: ${(p) => (p.$focus ? '1px dotted #444' : 'none')};
`

const Options = styled.div`
  padding: 1px 0;
`

const Field = styled.div`
  height: 19px;
  display: flex;
  align-items: center;
  padding-left: 14px;
`

const FieldLabel = styled.label`
  flex: 1;
`

const FieldInput = styled.input`
  width: 40px;
  height: 15px;
  padding: 0 3px;
  text-align: right;
  border: 0;
  border-bottom: 1px solid #8a8a8a;
  border-radius: 2px;
  background: #fff;
`

const Unit = styled.span`
  width: 18px;
  padding-left: 5px;
`

const Divider = styled.div`
  width: 4px;
  display: flex;
  align-items: center;
  justify-content: center;
`

const DividerDots = styled.div`
  width: 1px;
  height: 10px;
  background: repeating-linear-gradient(#999 0 1px, transparent 1px 3px);
`

const Work = styled.section`
  flex: 1;
  min-width: 0;
  display: flex;
  flex-direction: column;
`

const WorkBody = styled.div`
  flex: 1;
  display: flex;
  padding-top: 1px;
`

const SideBar = styled.div`
  width: 16px;
`

const SideGroup = styled.div`
  display: flex;
  flex-direction: column;
  padding-bottom: 4px;
  margin-bottom: 4px;
  border-bottom: 1px solid #c4c4c4;

  button {
    flex: none;
    width: 15px;
  }

  &:last-child {
    border: 0;
  }
`

const Viewport = styled.div`
  position: relative;
  flex: 1;
  background: #000;
`

const Coords = styled.output`
  position: absolute;
  left: 150px;
  top: 130px;
  padding: 0 6px;
  border: 1px solid #999;
  background: #fff;
  font: 10px/18px 'Liberation Sans', Arial, sans-serif;
  color: #000;
  white-space: nowrap;
`

// red call-out frame drawn over the dock
const Highlight = styled.div`
  position: absolute;
  left: -3px;
  top: -6px;
  width: 273px;
  height: 543px;
  border: 8px solid #ff0000;
  border-top-width: 7px;
  pointer-events: none;
`

const Tabs = styled.div`
  height: 13px;
  display: flex;
  background: #f0f0f0;
`

const Tab = styled.button`
  width: 54px;
  padding: 0;
  border: 0;
  line-height: 13px;
  font-size: ${(p) => (p.$active ? 9 : 8)}px;
  font-weight: ${(p) => (p.$active ? 700 : 400)};
  background: ${(p) => (p.$active ? '#cce8f8' : 'transparent')};
`

const Status = styled.footer`
  height: 12px;
  padding: 0 0 0 4px;
  overflow: hidden;
`
